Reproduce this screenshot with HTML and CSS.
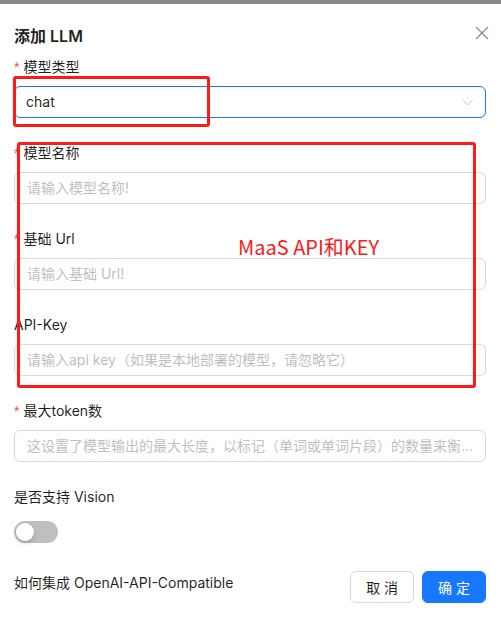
FILE: index.html
```html
<!DOCTYPE html>
<html lang="zh-CN">
<head>
  <meta charset="UTF-8">
  <meta name="viewport" content="width=device-width, initial-scale=1.0">
  <title>添加 LLM</title>
  <link rel="stylesheet" href="styles.css">
</head>
<body>

<div class="topbar"></div>

<div class="modal">
  <!-- 标题 -->
  <div class="modal-header">
    <h1>添加 LLM</h1>
    <span class="close">
      <svg width="14" height="14" viewBox="0 0 14 14"><path d="M1 1L13 13M13 1L1 13" stroke="#8c8c8c" stroke-width="1.3" fill="none"/></svg>
    </span>
  </div>

  <!-- 表单 -->
  <div class="form">
    <div class="item">
      <label class="required">模型类型</label>
      <div class="select">
        <span>chat</span>
        <svg width="11" height="7" viewBox="0 0 11 7"><path d="M0.5 0.5L5.5 6L10.5 0.5" stroke="#c6c6c6" stroke-width="1" fill="none"/></svg>
      </div>
    </div>

    <div class="item">
      <label class="required">模型名称</label>
      <div class="input">请输入模型名称!</div>
    </div>

    <div class="item">
      <label class="required">基础 Url</label>
      <div class="input">请输入基础 Url!</div>
    </div>

    <div class="item">
      <label>API-Key</label>
      <div class="input">请输入api key（如果是本地部署的模型，请忽略它）</div>
    </div>

    <div class="item">
      <label class="required">最大token数</label>
      <div class="input">这设置了模型输出的最大长度，以标记（单词或单词片段）的数量来衡量。</div>
    </div>

    <div class="item">
      <label>是否支持 Vision</label>
      <div class="control">
        <span class="switch"><span class="knob"></span></span>
      </div>
    </div>
  </div>

  <!-- 底部 -->
  <div class="footer">
    <span class="help">如何集成 OpenAI-API-Compatible</span>
    <div class="buttons">
      <button class="btn">取 消</button>
      <button class="btn primary">确 定</button>
    </div>
  </div>

  <!-- 标注 -->
  <div class="mark mark-type"></div>
  <div class="mark mark-maas"></div>
  <div class="mark-text">MaaS API和KEY</div>
</div>

</body>
</html>
```

FILE: styles.css
```css
* { box-sizing: border-box; }
body {
  margin: 0;
  background: #fff;
  font-family: Inter, "Noto Sans CJK SC", sans-serif;
  font-size: 14px;
  color: rgba(0, 0, 0, 0.88);
}

.topbar { height: 4px; background: #8a8a8a; }

.modal { position: relative; padding: 20px 15px 0 14px; }

/* 标题 */
.modal-header { display: flex; justify-content: space-between; align-items: center; height: 24px; margin-bottom: 8px; }
.modal-header h1 { margin: 0; font-size: 16px; font-weight: 600; line-height: 24px; }
.close { display: flex; margin-right: -3px; margin-top: -6px; }

/* 表单 */
.item { margin-bottom: 24px; }
.item label { display: block; line-height: 22px; padding-bottom: 8px; }
.item label.required::before {
  content: "*";
  color: #ff4d4f;
  margin-right: 4px;
  font-family: SimSun, "Liberation Sans", sans-serif;
}

.select, .input {
  height: 32px;
  border: 1px solid #d9d9d9;
  border-radius: 6px;
  padding: 0 11px;
  line-height: 30px;
  white-space: nowrap;
  overflow: hidden;
  text-overflow: ellipsis;
}
.input { color: #bfbfbf; padding-left: 12px; }
.select { display: flex; justify-content: space-between; align-items: center; border-color: #1677ff; }
.select svg { margin-right: 1px; }

.control { min-height: 32px; display: flex; align-items: center; }
.switch {
  position: relative;
  width: 44px;
  height: 22px;
  border-radius: 11px;
  background: #bfbfbf;
}
.knob {
  position: absolute;
  top: 2px; left: 2px;
  width: 18px; height: 18px;
  border-radius: 50%;
  background: #fff;
  box-shadow: 0 2px 4px rgba(0, 35, 11, 0.2);
}

/* 底部 */
.footer { display: flex; justify-content: space-between; align-items: center; margin-top: -1px; }
.help { margin-top: -10px; }
.buttons { display: flex; gap: 8px; }
.btn {
  height: 32px;
  padding: 0 15px;
  font-family: Inter, "Noto Sans CJK SC", sans-serif;
  font-size: 14px;
  border-radius: 6px;
  border: 1px solid #d9d9d9;
  background: #fff;
  color: rgba(0, 0, 0, 0.88);
  box-shadow: 0 2px 0 rgba(0, 0, 0, 0.02);
}
.btn.primary { background: #1677ff; border-color: #1677ff; color: #fff; box-shadow: 0 2px 0 rgba(5, 145, 255, 0.1); }

/* 标注 */
.mark { position: absolute; border: 3px solid #ff1a1a; border-radius: 3px; }
.mark-type { left: 13px; top: 72px; width: 197px; height: 51px; }
.mark-maas { left: 17px; top: 138px; width: 459px; height: 246px; }
.mark-text {
  position: absolute;
  left: 238px; top: 228px;
  color: #ff1a1a;
  font-size: 20px;
  font-family: "Noto Sans CJK SC", sans-serif;
}
```
